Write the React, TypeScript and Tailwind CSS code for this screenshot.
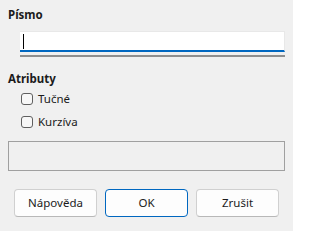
import { useState } from "react";

function Check({ label }: { label: string }) {
  const [on, setOn] = useState(false);
  return (
    <label className="flex h-[12px] items-center gap-[5px] cursor-default" onClick={() => setOn(!on)}>
      <span className="box-border h-[12px] w-[12px] rounded-[3px] border border-[#5f5f5f] bg-[#f7f7f7]">
        {on ? "✓" : null}
      </span>
      <span className="text-[11.5px] leading-[12px] text-[#1b1b1b]">{label}</span>
    </label>
  );
}

function Btn({ label, primary }: { label: string; primary?: boolean }) {
  return (
    <button
      type="button"
      className={`box-border h-[28px] w-[83px] rounded-[4px] bg-[#fdfdfd] text-[11.5px] text-[#1b1b1b] ${
        primary ? "border border-[#0067c0]" : "border border-[#d0d0d0] border-b-[#b8b8b8]"
      }`}
    >
      {label}
    </button>
  );
}

export default function App() {
  return (
    <div
      className="h-[231px] w-[293px] bg-[#f0f0f0] px-[8px] pt-[7px]"
      style={{ fontFamily: '"Segoe UI", "Noto Sans", "Open Sans", sans-serif' }}
    >
      <div className="h-[16px] text-[11.5px] font-bold leading-[16px] text-[#1b1b1b]">Písmo</div>
      <div className="ml-[12px] mt-[8px] w-[265px]">
        <div className="box-border flex h-[21px] items-center border-r border-t border-[#e8e8e8] border-b-2 border-b-[#0067c0] bg-white pl-[3px]">
          <span className="h-[15px] w-[1px] bg-black" />
        </div>
        <div className="mt-[3px] h-[2px] bg-[#8e8e8e]" />
      </div>
      <div className="mt-[14px] h-[16px] text-[11.5px] font-bold leading-[16px] text-[#1b1b1b]">Atributy</div>
      <div className="ml-[13px] mt-[6px] flex flex-col gap-[11px]">
        <Check label="Tučné" />
        <Check label="Kurzíva" />
      </div>
      <div className="mt-[13px] box-border h-[30px] w-[277px] border border-[#a0a0a0]" />
      <div className="ml-[6px] mt-[18px] flex gap-[8px]">
        <Btn label="Nápověda" />
        <Btn label="OK" primary />
        <Btn label="Zrušit" />
      </div>
    </div>
  );
}
